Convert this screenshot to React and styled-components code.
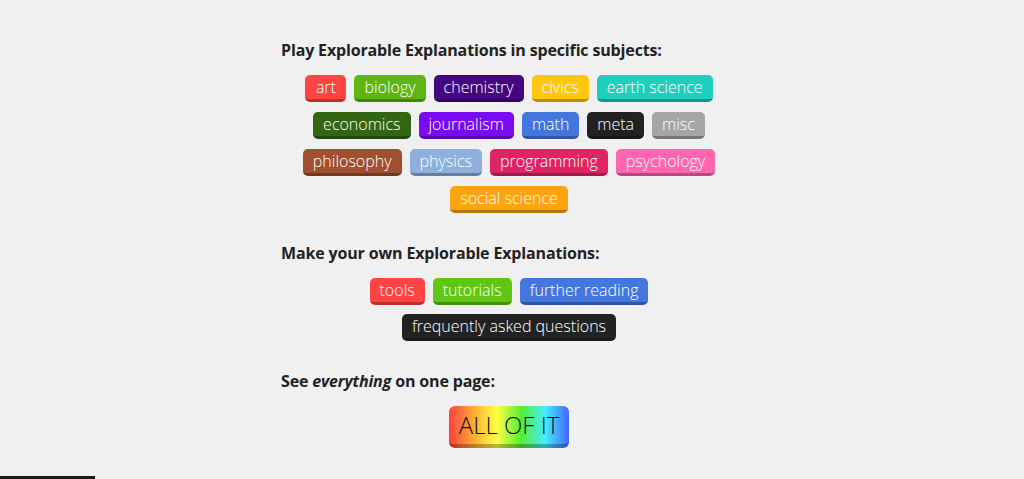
import React from 'react';
import styled, { createGlobalStyle } from 'styled-components';

const GlobalStyle = createGlobalStyle`
  html, body {
    margin: 0;
    padding: 0;
    background: #f0f0f0;
    font-family: "Open Sans", "Liberation Sans", sans-serif;
  }
`;

const Page = styled.div`
  min-height: 479px;
  box-sizing: border-box;
  padding-top: 40px;
`;

const Column = styled.div`
  width: 462px;
  margin: 0 auto;
`;

const Section = styled.section`
  margin-bottom: 30px;
`;

const Heading = styled.h2`
  margin: 0 0 15px;
  font-size: 16px;
  line-height: 20px;
  font-weight: 700;
  color: #222;
  letter-spacing: -0.15px;
`;

const Buttons = styled.div`
  display: flex;
  flex-wrap: wrap;
  justify-content: center;
  gap: ${({ $rowGap }) => $rowGap || 10}px 8px;
  width: 456px;
`;

const Tag = styled.a`
  display: inline-block;
  box-sizing: border-box;
  min-width: 41px;
  height: 27px;
  line-height: 24px;
  padding: 0 10px;
  border-radius: 5px;
  border-bottom: 3px solid rgba(0, 0, 0, 0.28);
  background: ${({ $color }) => $color};
  color: #fff;
  font-size: 16px;
  font-weight: 300;
  text-align: center;
  text-decoration: none;
  white-space: nowrap;
`;

const Rainbow = styled.a`
  display: inline-block;
  box-sizing: border-box;
  height: 42px;
  line-height: 38px;
  padding: 0 10px;
  border-radius: 6px;
  border-bottom: 4px solid rgba(0, 0, 0, 0.28);
  background: linear-gradient(to right, #ff4040, #ffaa33, #ffff44, #55ee33, #44eeff, #4466ff);
  color: #111;
  font-size: 24px;
  font-weight: 300;
  text-decoration: none;
`;

const BottomBar = styled.div`
  position: fixed;
  left: 0;
  bottom: 0;
  width: 95px;
  height: 3px;
  background: #1a1a1a;
`;

const subjects = [
  ['art', '#ff4444'],
  ['biology', '#5fb514'],
  ['chemistry', '#45057f'],
  ['civics', '#ffc80f'],
  ['earth science', '#1fcfbd'],
  ['economics', '#336611'],
  ['journalism', '#7a0bf0'],
  ['math', '#4477dd'],
  ['meta', '#222222'],
  ['misc', '#a6a6a6'],
  ['philosophy', '#9e5030'],
  ['physics', '#8db1dc'],
  ['programming', '#df2464'],
  ['psychology', '#ff66b0'],
  ['social science', '#ffa411'],
];

const making = [
  ['tools', '#ff4444'],
  ['tutorials', '#5fc714'],
  ['further reading', '#4477dd'],
  ['frequently asked questions', '#222222'],
];

export default function App() {
  return (
    <>
      <GlobalStyle />
      <Page>
        <Column>
          <Section>
            <Heading>Play Explorable Explanations in specific subjects:</Heading>
            <Buttons>
              {subjects.map(([name, color]) => (
                <Tag key={name} $color={color} href="#">{name}</Tag>
              ))}
            </Buttons>
          </Section>
          <Section>
            <Heading>Make your own Explorable Explanations:</Heading>
            <Buttons $rowGap={9}>
              {making.map(([name, color]) => (
                <Tag key={name} $color={color} href="#">{name}</Tag>
              ))}
            </Buttons>
          </Section>
          <Section>
            <Heading>See <em>everything</em> on one page:</Heading>
            <Buttons>
              <Rainbow href="#">ALL OF IT</Rainbow>
            </Buttons>
          </Section>
        </Column>
      </Page>
      <BottomBar />
    </>
  );
}
